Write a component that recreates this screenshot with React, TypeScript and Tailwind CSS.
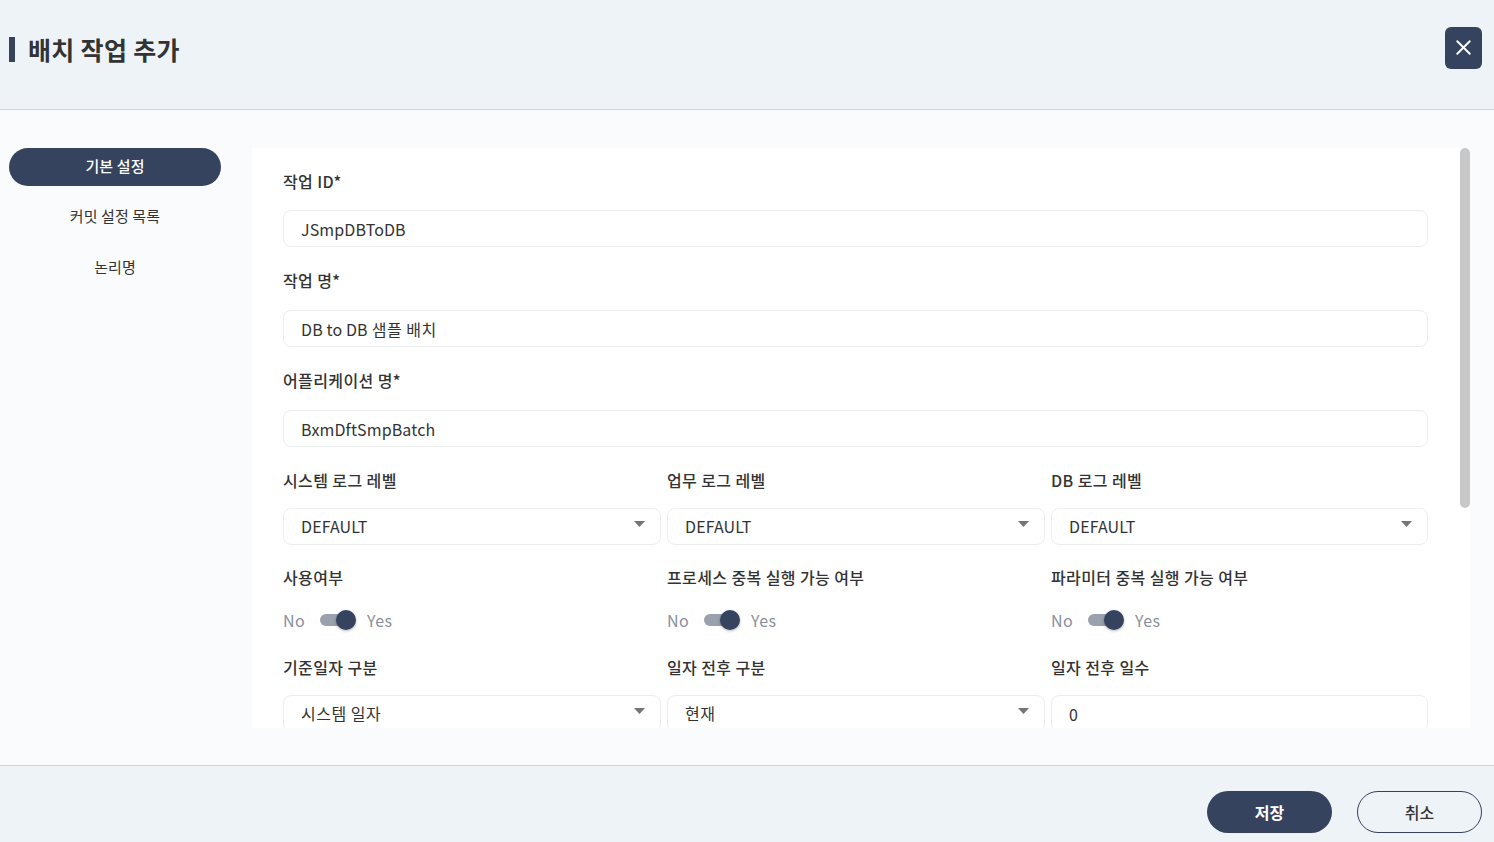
import React from "react";
import { X } from "lucide-react";

const font = { fontFamily: '"Noto Sans CJK KR", "Noto Sans", sans-serif' };

function Label({ children }: { children: React.ReactNode }) {
  return <div className="h-[24px] shrink-0 text-[16px] leading-[24px] font-medium tracking-[0.4px] text-[#333]">{children}</div>;
}

function Value({ value }: { value: string }) {
  const parts = value.split(/([\uac00-\ud7a3 ]*[\uac00-\ud7a3])/);
  return (
    <span className="tracking-[0.12px]">
      {parts.map((p, i) =>
        /[\uac00-\ud7a3]/.test(p) ? (
          <span key={i} className="tracking-[0.5px]">{p}</span>
        ) : (
          <span key={i}>{p}</span>
        )
      )}
    </span>
  );
}

function Input({ value }: { value: string }) {
  return (
    <div className="h-[37px] shrink-0 rounded-[8px] border border-[#ebedf0] bg-white pl-[17px] text-[16px] leading-[37px] text-[#333]">
      <Value value={value} />
    </div>
  );
}

function Select({ value }: { value: string }) {
  return (
    <div className="relative h-[37px] shrink-0 rounded-[8px] border border-[#ebedf0] bg-white pl-[17px] text-[16px] leading-[35px] text-[#333]">
      <Value value={value} />
      <svg className="absolute right-[15px] top-[12px]" width="11" height="6" viewBox="0 0 11 6">
        <path d="M0 0h11L5.5 6z" fill="#757575" />
      </svg>
    </div>
  );
}

function Toggle() {
  return (
    <div className="flex h-[24px] items-center text-[16px] tracking-[0.4px] text-[#8a8f99]">
      <span className="w-[37px]">No</span>
      <span className="relative block h-[12px] w-[24px] rounded-full bg-[#9aa0ad]">
        <span className="absolute left-[16px] top-[-4px] h-[20px] w-[20px] rounded-full bg-[#35435e] shadow-[0_1px_3px_rgba(0,0,0,0.3)]" />
      </span>
      <span className="ml-[23px]">Yes</span>
    </div>
  );
}

function Field({ label, className, children }: { label: string; className: string; children: React.ReactNode }) {
  return (
    <div className={`flex flex-col ${className}`}>
      <Label>{label}</Label>
      {children}
    </div>
  );
}

export default function App() {
  return (
    <div style={font} className="flex h-[842px] w-[1494px] flex-col overflow-hidden bg-[#f9fbfd]">
      <header className="flex h-[110px] shrink-0 items-start justify-between border-b border-[#d0d5dc] bg-[#eef3f8] pl-[9px] pr-[12px]">
        <div className="mt-[37px] flex items-start">
          <span className="h-[25px] w-[6px] bg-[#35435e]" />
          <h1 className="ml-[13px] h-[25px] text-[25px] leading-[24px] font-bold tracking-[0.3px] text-[#333]">배치 작업 추가</h1>
        </div>
        <button className="mt-[27px] flex h-[42px] w-[37px] items-center justify-center rounded-[6px] bg-[#35435e] pb-[1px] text-white">
          <X size={25} strokeWidth={1.8} />
        </button>
      </header>

      <main className="flex h-[655px] shrink-0 pl-[9px] pt-[38px]">
        <nav className="flex w-[212px] shrink-0 flex-col items-center text-[15px] tracking-[0.1px] text-[#333]">
          <div className="flex h-[38px] w-full items-center justify-center rounded-full bg-[#35435e] pb-[1px] font-medium text-white">기본 설정</div>
          <div className="mt-[12px] flex h-[38px] items-center pb-[1px]">커밋 설정 목록</div>
          <div className="mt-[13px] flex h-[38px] items-center pb-[1px]">논리명</div>
        </nav>
        <section className="ml-[31px] flex h-[580px] w-[1218px] shrink-0 overflow-hidden bg-white">
          <div className="ml-[31px] flex w-[1145px] shrink-0 flex-col pt-[21px]">
            <Field label="작업 ID*" className="gap-[17px]"><Input value="JSmpDBToDB" /></Field>
            <Field label="작업 명*" className="mt-[21px] gap-[18px]"><Input value="DB to DB 샘플 배치" /></Field>
            <Field label="어플리케이션 명*" className="mt-[21px] gap-[18px]"><Input value="BxmDftSmpBatch" /></Field>

            <div className="mt-[21px] grid grid-cols-[378px_378px_377px] gap-x-[6px]">
              <Field label="시스템 로그 레벨" className="gap-[16px]"><Select value="DEFAULT" /></Field>
              <Field label="업무 로그 레벨" className="gap-[16px]"><Select value="DEFAULT" /></Field>
              <Field label="DB 로그 레벨" className="gap-[16px]"><Select value="DEFAULT" /></Field>
            </div>

            <div className="mt-[20px] grid grid-cols-[378px_378px_377px] gap-x-[6px]">
              <Field label="사용여부" className="gap-[19px]"><Toggle /></Field>
              <Field label="프로세스 중복 실행 가능 여부" className="gap-[19px]"><Toggle /></Field>
              <Field label="파라미터 중복 실행 가능 여부" className="gap-[19px]"><Toggle /></Field>
            </div>

            <div className="mt-[23px] grid grid-cols-[378px_378px_377px] gap-x-[6px]">
              <Field label="기준일자 구분" className="gap-[16px]"><Select value="시스템 일자" /></Field>
              <Field label="일자 전후 구분" className="gap-[16px]"><Select value="현재" /></Field>
              <Field label="일자 전후 일수" className="gap-[16px]"><Input value="0" /></Field>
            </div>
          </div>
          <div className="ml-[32px] h-full w-[10px] shrink-0">
            <div className="h-[360px] rounded-[5px] bg-[#c8c8c8]" />
          </div>
        </section>
      </main>

      <footer className="flex flex-1 items-start justify-end gap-[25px] border-t border-[#d0d5dc] bg-[#eef3f8] pr-[12px] pt-[25px]">
        <button className="h-[42px] w-[125px] rounded-full bg-[#35435e] text-[16px] font-bold text-white">저장</button>
        <button className="h-[42px] w-[125px] rounded-full border border-[#35435e] text-[16px] font-medium text-[#333]">취소</button>
      </footer>
    </div>
  );
}
